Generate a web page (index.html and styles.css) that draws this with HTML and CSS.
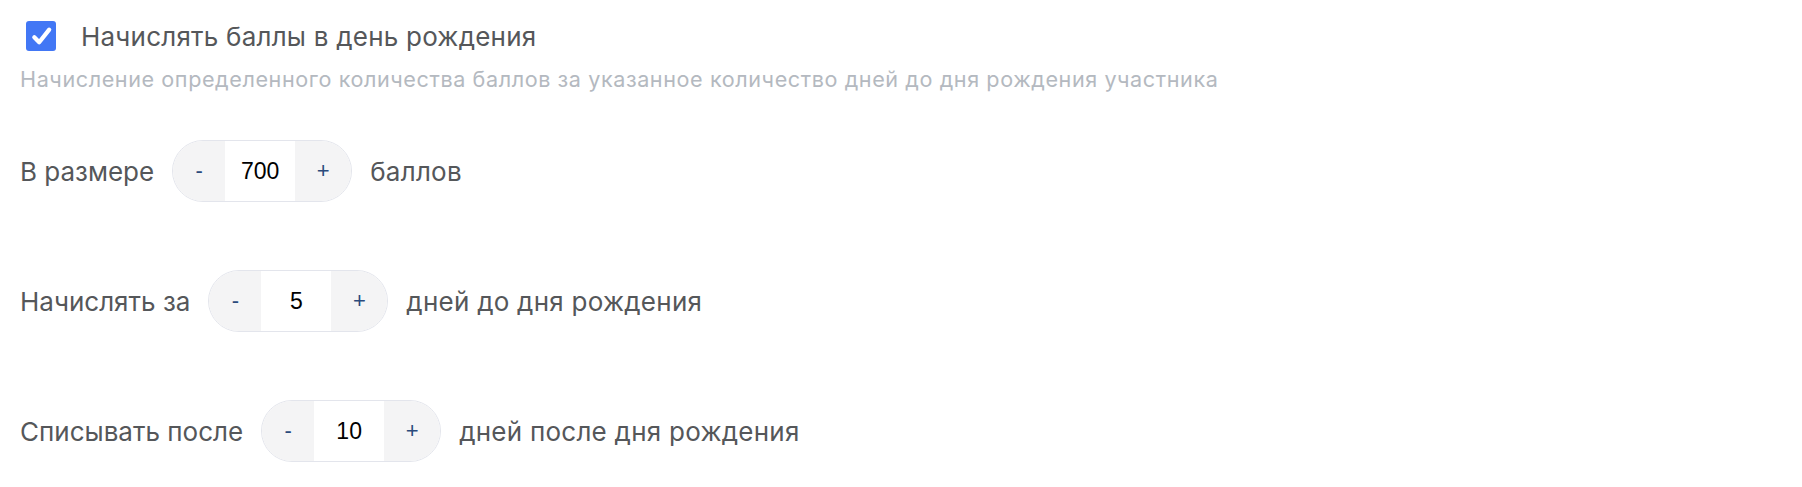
FILE: index.html
```html
<!DOCTYPE html>
<html lang="ru">
<head>
    <meta charset="UTF-8">
    <meta name="viewport" content="width=device-width, initial-scale=1.0">
    <title>Баллы в день рождения</title>
    <link rel="stylesheet" href="styles.css">
</head>
<body>

    <div class="birthday">
        <!-- Toggle -->
        <label class="check-row">
            <span class="checkbox">
                <svg viewBox="0 0 30 30" width="30" height="30">
                    <path d="M8.3 16.2 L13.2 21.3 L23.2 8.6" fill="none" stroke="#fff" stroke-width="4.2" stroke-linecap="round" stroke-linejoin="round"/>
                </svg>
            </span>
            <span class="check-title">Начислять баллы в день рождения</span>
        </label>
        <p class="hint">Начисление определенного количества баллов за указанное количество дней до дня рождения участника</p>

        <!-- Settings -->
        <div class="param-row">
            <span class="param-label">В размере</span>
            <div class="stepper">
                <button class="step-btn step-minus">-</button>
                <span class="step-value">700</span>
                <button class="step-btn step-plus">+</button>
            </div>
            <span class="param-label param-suffix">баллов</span>
        </div>

        <div class="param-row">
            <span class="param-label">Начислять за</span>
            <div class="stepper">
                <button class="step-btn step-minus">-</button>
                <span class="step-value">5</span>
                <button class="step-btn step-plus">+</button>
            </div>
            <span class="param-label param-suffix">дней до дня рождения</span>
        </div>

        <div class="param-row">
            <span class="param-label">Списывать после</span>
            <div class="stepper">
                <button class="step-btn step-minus">-</button>
                <span class="step-value">10</span>
                <button class="step-btn step-plus">+</button>
            </div>
            <span class="param-label param-suffix">дней после дня рождения</span>
        </div>
    </div>

</body>
</html>
```

FILE: styles.css
```css
body {
    margin: 0;
    padding: 0;
    background-color: #ffffff;
    font-family: Inter, "Open Sans", sans-serif;
}
.birthday {
    padding: 21px 20px 0 20px;
}
.check-row {
    display: flex;
    align-items: center;
    gap: 25px;
    height: 30px;
    padding-left: 6px;
    cursor: pointer;
}
.checkbox {
    width: 30px;
    height: 30px;
    border-radius: 3px;
    background-color: #4277f5;
    display: flex;
}
.check-title {
    font-size: 26px;
    letter-spacing: 0.22px;
    color: #55575a;
}
.hint {
    margin: 14px 0 0 0;
    font-size: 21.6px;
    line-height: 28px;
    letter-spacing: 0.58px;
    color: #b4b9c0;
}
.param-row {
    display: flex;
    align-items: center;
    gap: 18px;
    margin-top: 47px;
}
.param-row + .param-row {
    margin-top: 68px;
}
.param-label {
    font-size: 26px;
    color: #55575a;
}
.param-suffix {
    letter-spacing: 0.25px;
}
.stepper {
    display: flex;
    height: 62px;
    border: 1px solid #e3e5ec;
    border-radius: 31px;
    overflow: hidden;
    box-sizing: border-box;
}
.step-btn {
    border: none;
    background-color: #f4f4f5;
    color: #2a4a7c;
    font-family: "Liberation Sans", Arial, sans-serif;
    font-size: 22px;
    padding: 0;
    cursor: pointer;
}
.step-minus {
    width: 52px;
}
.step-plus {
    width: 56px;
}
.step-value {
    width: 70px;
    display: flex;
    align-items: center;
    justify-content: center;
    background-color: #ffffff;
    font-family: "Liberation Sans", Arial, sans-serif;
    font-size: 23px;
    color: #000000;
}
```
